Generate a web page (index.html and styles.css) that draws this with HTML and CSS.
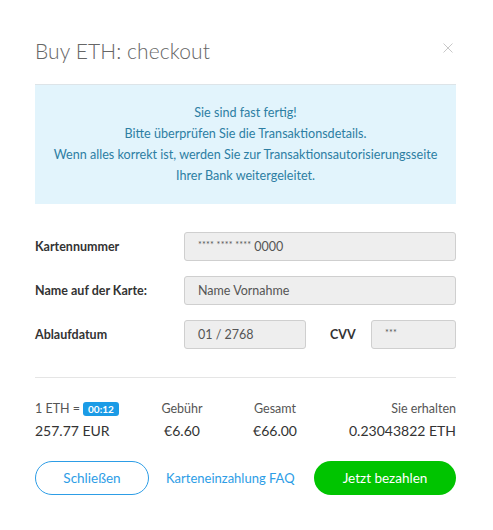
FILE: index.html
```html
<!DOCTYPE html>
<html lang="de">
<head>
<meta charset="utf-8">
<title>Buy ETH: checkout</title>
<link rel="stylesheet" href="styles.css">
</head>
<body>
<div class="modal">
  <div class="header">
    <h1 class="title">Buy ETH: checkout</h1>
    <span class="close">
      <svg width="10" height="10" viewBox="0 0 10 10"><path d="M0.5 0.5L9.5 9.5M9.5 0.5L0.5 9.5" stroke="#c8c8c8" stroke-width="1" fill="none"/></svg>
    </span>
  </div>
  <div class="info">
    <p>Sie sind fast fertig!</p>
    <p>Bitte überprüfen Sie die Transaktionsdetails.</p>
    <p>Wenn alles korrekt ist, werden Sie zur Transaktionsautorisierungsseite</p>
    <p>Ihrer Bank weitergeleitet.</p>
  </div>
  <div class="form">
    <div class="row">
      <span class="label">Kartennummer</span>
      <div class="input wide"><span class="stars">**** **** ****</span> 0000</div>
    </div>
    <div class="row">
      <span class="label">Name auf der Karte:</span>
      <div class="input wide">Name Vornahme</div>
    </div>
    <div class="row">
      <span class="label">Ablaufdatum</span>
      <div class="input date">01 / 2768</div>
      <span class="label cvv-label">CVV</span>
      <div class="input cvv"><span class="stars">***</span></div>
    </div>
  </div>
  <div class="divider"></div>
  <div class="summary">
    <div class="col c1">
      <div class="head">1 ETH = <span class="badge">00:12</span></div>
      <div class="val">257.77 EUR</div>
    </div>
    <div class="col c2">
      <div class="head">Gebühr</div>
      <div class="val">€6.60</div>
    </div>
    <div class="col c3">
      <div class="head">Gesamt</div>
      <div class="val">€66.00</div>
    </div>
    <div class="col c4">
      <div class="head">Sie erhalten</div>
      <div class="val">0.23043822 ETH</div>
    </div>
  </div>
  <div class="actions">
    <button class="btn outline">Schließen</button>
    <a class="faq">Karteneinzahlung FAQ</a>
    <button class="btn green">Jetzt bezahlen</button>
  </div>
</div>
</body>
</html>
```

FILE: styles.css
```css
* { box-sizing: border-box; }
html, body { margin: 0; padding: 0; background: #fff; }
body { font-family: "Lato", "Noto Sans", sans-serif; color: #333; }
.modal { width: 493px; padding: 34px 37px 0 35px; }
.header { display: flex; justify-content: space-between; align-items: center; height: 32px; }
.title { margin: 0; font-weight: 300; font-size: 21px; color: #666; letter-spacing: 0.1px; }
.close { display: flex; margin-right: 3px; margin-top: -4px; }
.info { margin-top: 18px; background: #e2f4fc; border-top: 1px solid #dde4e8; height: 120px; display: flex; flex-direction: column; justify-content: center; align-items: center; color: #2d7ea3; font-size: 12.6px; padding-bottom: 2px; }
.info p { margin: 0; line-height: 21px; }
.form { margin-top: 28px; display: flex; flex-direction: column; gap: 15px; }
.row { display: flex; align-items: center; }
.label { flex: 0 0 149px; font-size: 12.5px; font-weight: 700; color: #333; }
.input { flex: 0 0 auto; height: 29px; background: #eeeeee; border: 1px solid #cfcfcf; border-radius: 3px; font-size: 12.5px; color: #555; padding-left: 13px; display: flex; align-items: center; }
.input.wide { width: 272px; }
.input.date { width: 122px; }
.cvv-label { flex: 0 0 auto; margin-left: 24px; }
.input.cvv { width: 85px; margin-left: auto; }
.stars { font-size: 9px; letter-spacing: 0.2px; margin-right: 3px; position: relative; top: -2px; }
.divider { margin-top: 28px; height: 1px; background: #e5e5e5; }
.summary { margin-top: 23px; display: flex; }
.col { display: flex; flex-direction: column; gap: 6px; }
.head { font-size: 12.5px; color: #555; height: 15px; display: flex; align-items: center; }
.val { font-size: 14px; color: #333; }
.c1 { width: 127px; }
.c2 { align-items: center; width: 40px; margin-right: 52px; }
.c3 { align-items: center; width: 42px; }
.c4 { flex: 1; align-items: flex-end; }
.badge { display: inline-block; background: #1b9be6; color: #fff; font-size: 10px; border-radius: 3px; padding: 1px 5px; margin-left: 3px; font-weight: 700; }
.actions { margin-top: 22px; display: flex; align-items: center; }
.btn { height: 34px; border-radius: 17px; font-family: inherit; font-size: 13.5px; cursor: pointer; }
.btn.outline { width: 114px; background: #fff; border: 1px solid #2d9de6; color: #2d9de6; }
.faq { margin-left: 17px; color: #2d9de6; font-size: 13px; width: 148px; }
.btn.green { width: 142px; background: #00c400; border: none; color: #fff; margin-left: 0; }
```
